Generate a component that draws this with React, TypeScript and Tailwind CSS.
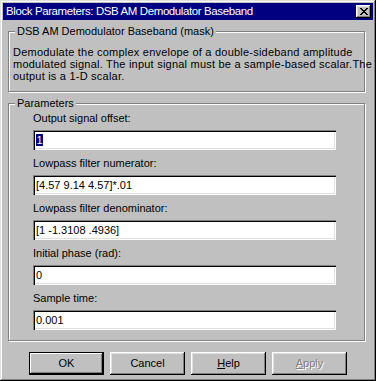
import React from "react"

interface Field {
  label: string
  value: string
  selected?: boolean
}

const fields: Field[] = [
  { label: "Output signal offset:", value: "1", selected: true },
  { label: "Lowpass filter numerator:", value: "[4.57 9.14 4.57]*.01" },
  { label: "Lowpass filter denominator:", value: "[1 -1.3108 .4936]" },
  { label: "Initial phase (rad):", value: "0" },
  { label: "Sample time:", value: "0.001" },
]

const bevel =
  "shadow-[inset_-1px_-1px_#000,inset_1px_1px_#fff,inset_-2px_-2px_#808080,inset_2px_2px_#dfdfdf]"

function GroupLabel({ children }: { children: React.ReactNode }) {
  return (
    <div className="-mt-[7px] ml-[6px] w-fit bg-[#c0c0c0] px-[2px] h-[13px] leading-[13px] whitespace-nowrap">
      {children}
    </div>
  )
}

function Button({
  children,
  isDefault,
  disabled,
}: {
  children: React.ReactNode
  isDefault?: boolean
  disabled?: boolean
}) {
  return (
    <div
      className={
        "w-[75px] h-[23px] flex items-center justify-center bg-[#c0c0c0] " +
        (isDefault
          ? "border border-black shadow-[inset_-1px_-1px_#000,inset_1px_1px_#fff,inset_-2px_-2px_#808080]"
          : bevel) +
        (disabled ? " text-[#808080] [text-shadow:1px_1px_#fff]" : " text-black")
      }
    >
      {children}
    </div>
  )
}

export default function App() {
  return (
    <div className="w-[376px] h-[381px] bg-[#c0c0c0] p-[3px] font-['Liberation_Sans',Arial,sans-serif] text-[11px] text-black shadow-[inset_-1px_-1px_#000,inset_1px_1px_#dfdfdf,inset_-2px_-2px_#808080,inset_2px_2px_#fff]">
      {/* title bar */}
      <div className="h-[17px] bg-[#000080] flex items-center justify-between pl-[3px] pr-[2px]">
        <span className="text-white text-[11.5px] tracking-[-0.4px] leading-[17px] whitespace-nowrap">
          Block Parameters: DSB AM Demodulator Baseband
        </span>
        <div className={"w-[15px] h-[13px] bg-[#c0c0c0] flex items-center justify-center " + bevel}>
          <svg width="8" height="7" viewBox="0 0 8 7" shapeRendering="crispEdges">
            <path
              d="M0 0h2v1h-2z M6 0h2v1h-2z M1 1h2v1h-2z M5 1h2v1h-2z M2 2h4v1h-4z M3 3h2v1h-2z M2 4h4v1h-4z M1 5h2v1h-2z M5 5h2v1h-2z M0 6h2v1h-2z M6 6h2v1h-2z"
              fill="#000"
            />
          </svg>
        </div>
      </div>

      <div className="px-[5px]">
        {/* mask description */}
        <div className="mt-[11px] w-[357px] h-[61px] border border-[#808080] shadow-[inset_1px_1px_#fff,1px_1px_#fff]">
          <GroupLabel>DSB AM Demodulator Baseband (mask)</GroupLabel>
          <div className="mt-[8px] pl-[4px] leading-[12px] tracking-[0.22px] whitespace-nowrap">
            Demodulate the complex envelope of a double-sideband amplitude
            <br />
            modulated signal. The input signal must be a sample-based scalar.The
            <br />
            output is a 1-D scalar.
          </div>
        </div>

        {/* parameters */}
        <div className="mt-[11px] w-[357px] h-[238px] border border-[#808080] shadow-[inset_1px_1px_#fff,1px_1px_#fff]">
          <GroupLabel>Parameters</GroupLabel>
          <div className="mt-[2px] pl-[24px] flex flex-col gap-[7px]">
            {fields.map((f) => (
              <div key={f.label} className="flex flex-col gap-[5px]">
                <div className="h-[13px] leading-[13px] whitespace-nowrap">{f.label}</div>
                <div className="w-[303px] h-[20px] bg-white flex items-center pl-[3px] shadow-[inset_1px_1px_#808080,inset_2px_2px_#000,inset_-1px_-1px_#fff,inset_-2px_-2px_#dfdfdf]">
                  {f.selected ? (
                    <span className="bg-[#000080] text-white leading-[12px] px-[0.5px]">{f.value}</span>
                  ) : (
                    <span className="leading-[12px] whitespace-nowrap">{f.value}</span>
                  )}
                </div>
              </div>
            ))}
          </div>
        </div>

        {/* buttons */}
        <div className="mt-[11px] pl-[21px] flex gap-[6px]">
          <Button isDefault>OK</Button>
          <Button>Cancel</Button>
          <Button>
            <span>
              <span className="underline">H</span>elp
            </span>
          </Button>
          <Button disabled>
            <span>
              <span className="underline">A</span>pply
            </span>
          </Button>
        </div>
      </div>
    </div>
  )
}
